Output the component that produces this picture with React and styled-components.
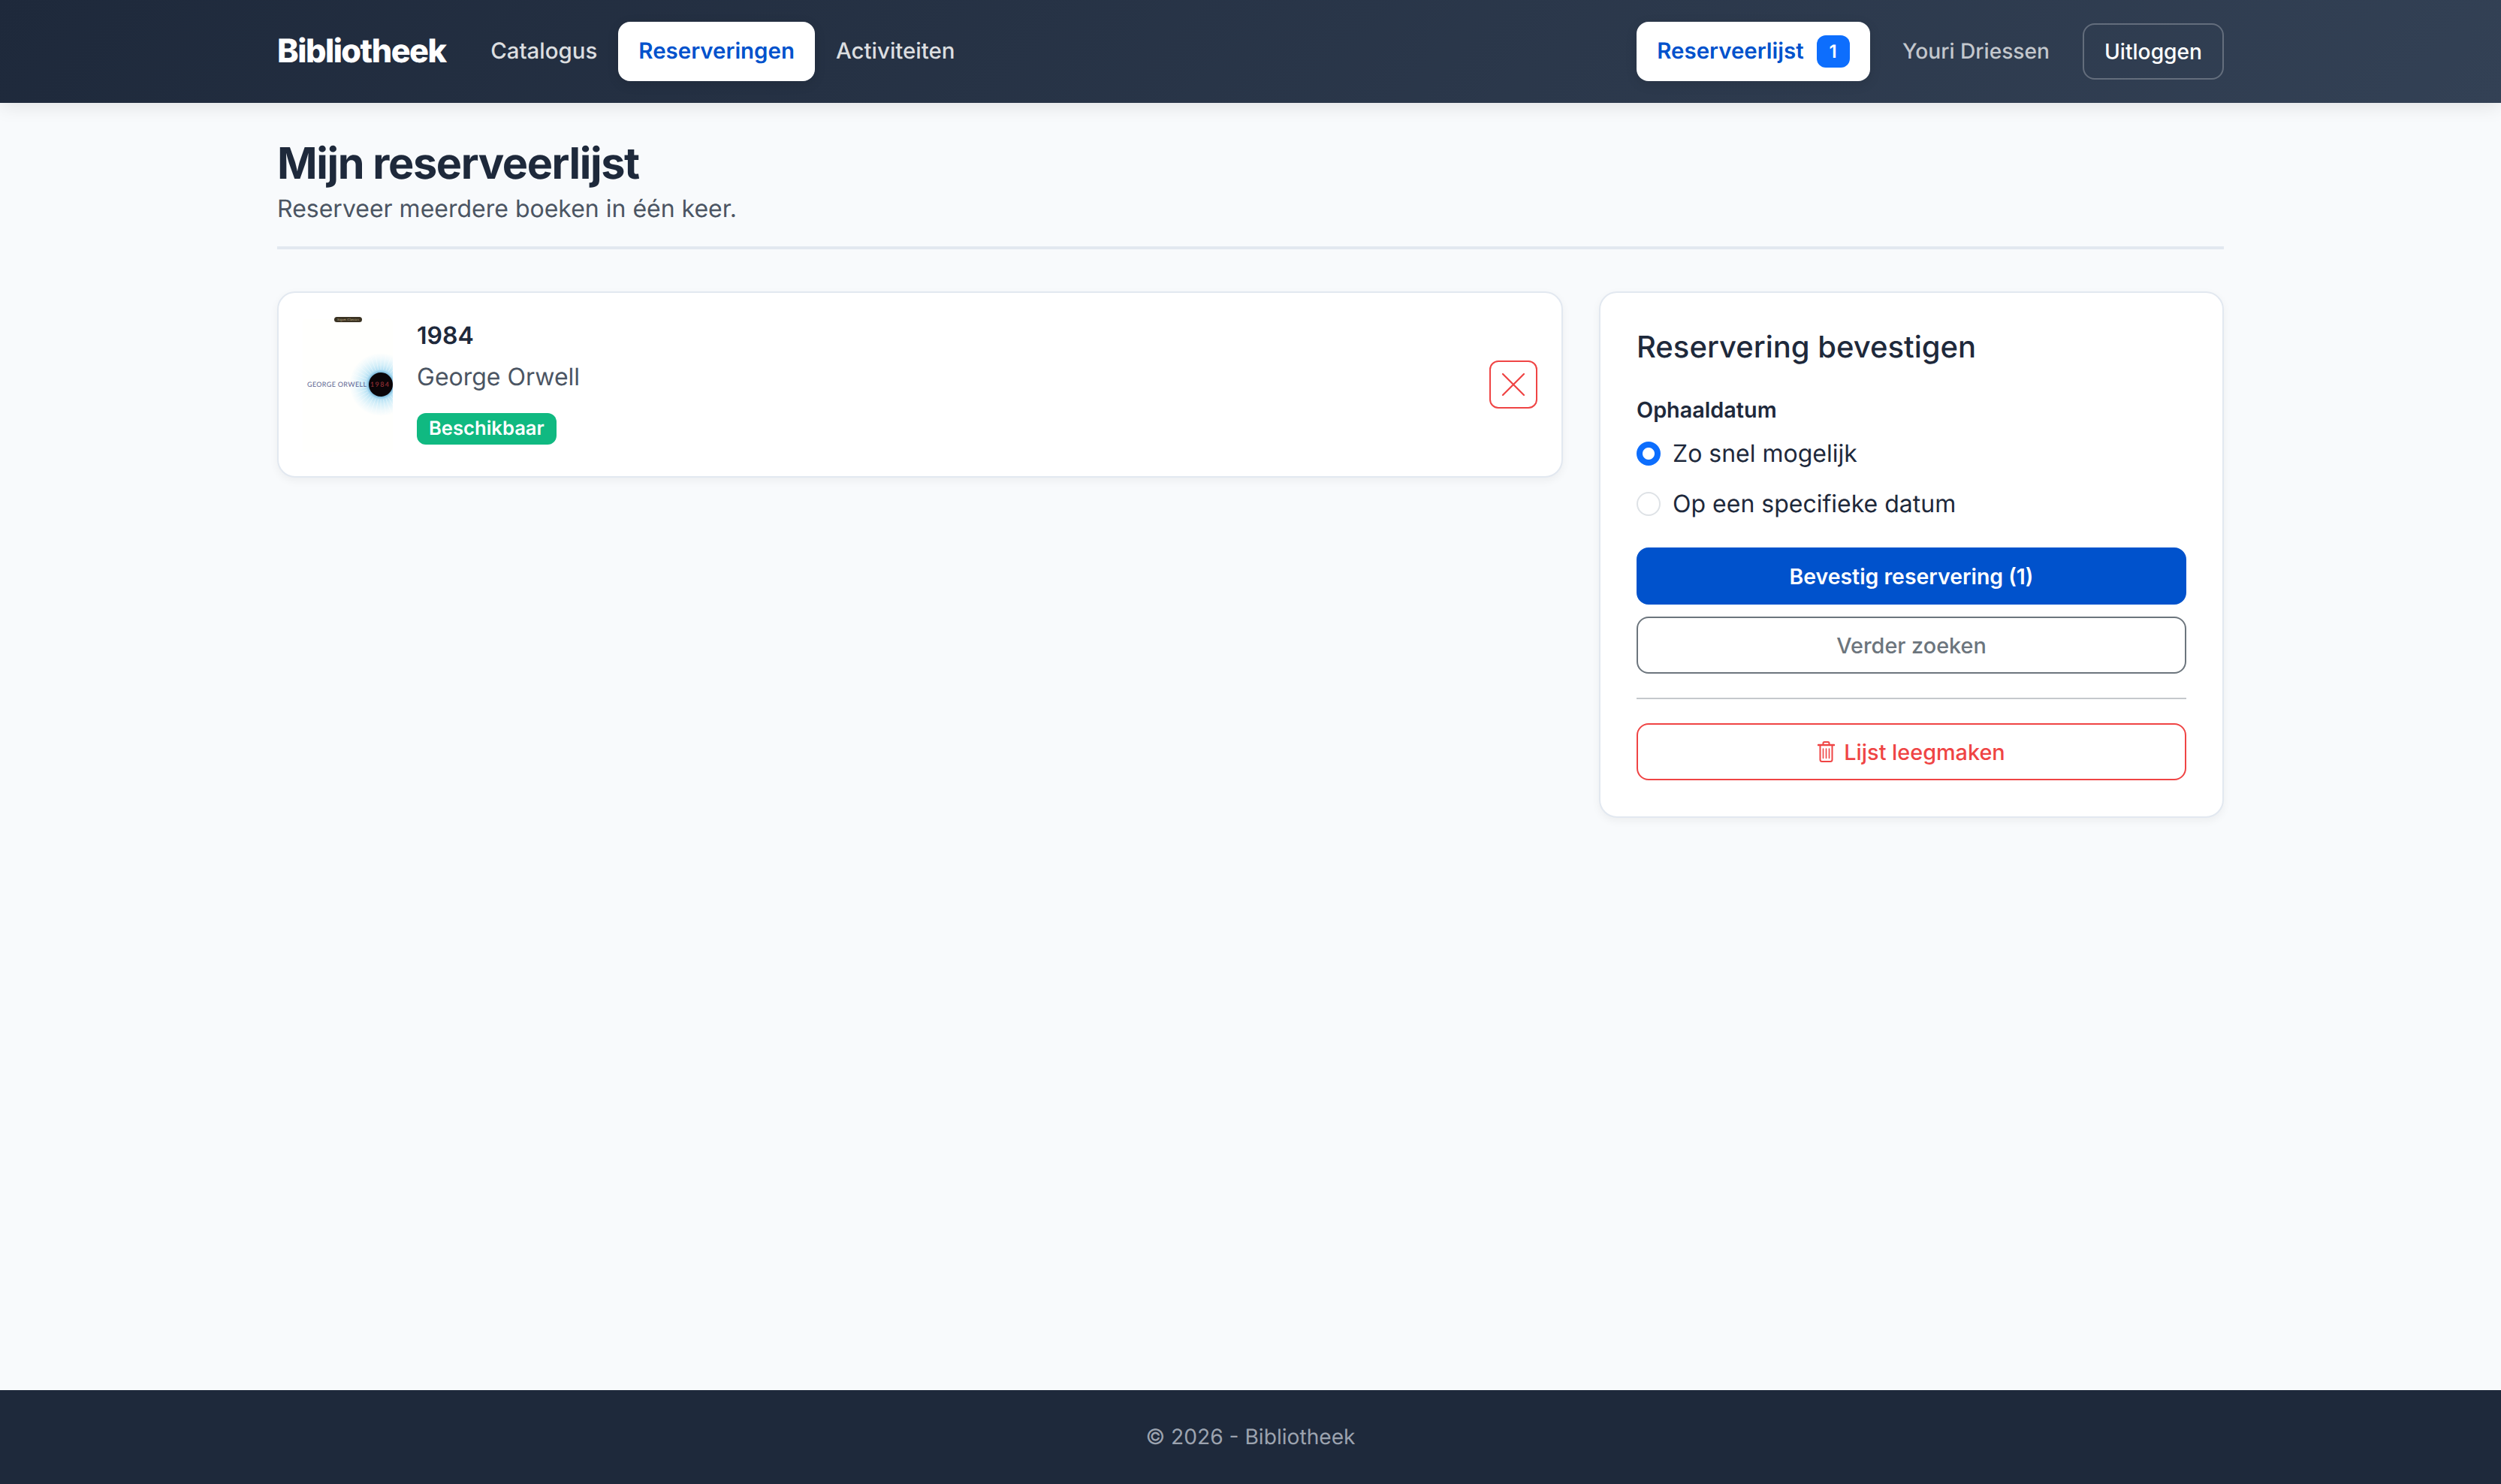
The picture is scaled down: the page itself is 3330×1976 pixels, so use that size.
import React from "react";
import styled, { createGlobalStyle } from "styled-components";

const GlobalStyle = createGlobalStyle`
  * {
    box-sizing: border-box;
  }
  html, body {
    margin: 0;
    padding: 0;
  }
  body {
    background: #f8fafc;
    color: #1e293b;
    font-family: "Inter", "Liberation Sans", sans-serif;
    font-size: 32px;
    line-height: 1.5;
    text-rendering: geometricPrecision;
  }
`;

const Page = styled.div`
  min-height: 100vh;
  display: flex;
  flex-direction: column;
`;

const Navbar = styled.nav`
  height: 137px;
  flex: none;
  background: linear-gradient(135deg, #1e293b, #334155);
  box-shadow: 0 4px 24px rgba(0, 0, 0, 0.1);
  position: relative;
`;

const Container = styled.div`
  width: 2592px;
  margin: 0 auto;
`;

const NavInner = styled(Container)`
  height: 100%;
  display: flex;
  align-items: center;
`;

const Brand = styled.a`
  color: #fff;
  font-size: 43.2px;
  font-weight: 800;
  letter-spacing: -0.035em;
  margin-right: 32px;
`;

const NavLink = styled.a`
  height: 79px;
  display: flex;
  align-items: center;
  gap: 17px;
  padding: 0 27.5px;
  border-radius: 16px;
  font-size: 29.44px;
  color: ${(p) => (p.$active ? "#0052cc" : "rgba(255, 255, 255, 0.85)")};
  background: ${(p) => (p.$active ? "#fff" : "transparent")};
  font-weight: ${(p) => (p.$active ? 600 : 500)};
  box-shadow: ${(p) => (p.$active ? "0 4px 16px rgba(0, 0, 0, 0.1)" : "none")};
`;

const NavRight = styled.div`
  margin-left: auto;
  display: flex;
  align-items: center;
`;

const CountBadge = styled.span`
  width: 44px;
  height: 43px;
  display: flex;
  align-items: center;
  justify-content: center;
  border-radius: 12px;
  background: #0d6efd;
  color: #fff;
  font-size: 24px;
  font-weight: 600;
`;

const UserName = styled.span`
  margin: 0 44px 0 43px;
  font-size: 28.16px;
  font-weight: 500;
  color: rgba(255, 255, 255, 0.72);
`;

const LogoutButton = styled.button`
  width: 188px;
  height: 75px;
  border: 2px solid rgba(255, 255, 255, 0.25);
  border-radius: 16px;
  background: transparent;
  color: #fff;
  font: 500 28.16px "Inter", sans-serif;
`;

const Main = styled(Container)`
  flex: 1;
  padding-top: 46px;
`;

const PageHeader = styled.header`
  border-bottom: 4px solid #e2e8f0;
  padding-bottom: 26px;
  margin-bottom: 56px;
`;

const PageTitle = styled.h1`
  margin: 0 0 2px;
  font-size: 57.6px;
  line-height: 69px;
  font-weight: 700;
  letter-spacing: -1.4px;
  color: #1e293b;
`;

const PageSubtitle = styled.p`
  margin: 0;
  font-size: 32px;
  color: #4b5563;
`;

const Columns = styled.div`
  display: grid;
  grid-template-columns: 1712px 832px;
  gap: 48px;
  align-items: start;
`;

const Card = styled.section`
  background: #fff;
  border: 2px solid #e2e8f0;
  border-radius: 24px;
  box-shadow: 0 4px 12px rgba(0, 0, 0, 0.05);
`;

const BookCard = styled(Card)`
  display: flex;
  align-items: center;
  gap: 32px;
  padding: 32px;
`;

const BookInfo = styled.div`
  flex: 1;
  margin-bottom: 4px;
  display: flex;
  flex-direction: column;
  align-items: flex-start;
`;

const BookTitle = styled.h3`
  margin: 0 0 12px;
  font-size: 32px;
  line-height: 38px;
  font-weight: 600;
  color: #1e293b;
`;

const BookAuthor = styled.p`
  margin: 0 0 24px;
  font-size: 32px;
  line-height: 48px;
  color: #4b5563;
`;

const StatusBadge = styled.span`
  height: 42px;
  display: flex;
  align-items: center;
  padding: 0 16px;
  border-radius: 12px;
  background: #10b981;
  color: #fff;
  font-size: 25.6px;
  font-weight: 600;
`;

const RemoveButton = styled.button`
  width: 64px;
  height: 64px;
  flex: none;
  display: flex;
  align-items: center;
  justify-content: center;
  padding: 0;
  border: 2px solid #ef4444;
  border-radius: 12px;
  background: #fff;
  color: #ef4444;
`;

const SummaryCard = styled(Card)`
  padding: 48px;
  display: flex;
  flex-direction: column;
`;

const SummaryTitle = styled.h2`
  margin: 0 0 38px;
  font-size: 40px;
  line-height: 48px;
  font-weight: 500;
  color: #1e293b;
`;

const FieldLabel = styled.label`
  font-size: 28.8px;
  line-height: 43px;
  font-weight: 600;
  margin-bottom: 3px;
`;

const RadioRow = styled.label`
  height: 67px;
  display: flex;
  align-items: center;
  gap: 16px;
  font-size: 32px;
`;

const Radio = styled.input`
  appearance: none;
  width: 32px;
  height: 32px;
  margin: 0;
  flex: none;
  border-radius: 50%;
  border: 2px solid #dee2e6;
  background: #fff;
  &:checked {
    border-color: #0d6efd;
    background: radial-gradient(circle, #fff 7.5px, #0d6efd 8.5px);
  }
`;

const ActionButton = styled.button`
  width: 100%;
  height: 76px;
  margin-top: ${(p) => p.$top || 0}px;
  display: flex;
  align-items: center;
  justify-content: center;
  gap: 12px;
  border: 2px solid ${(p) => p.$color};
  border-radius: 16px;
  background: ${(p) => (p.$solid ? p.$color : "#fff")};
  color: ${(p) => (p.$solid ? "#fff" : p.$color)};
  font: ${(p) => (p.$solid ? "600 28.4px" : "500 28.8px")} "Inter", sans-serif;
`;

const Divider = styled.hr`
  width: 100%;
  margin: 32px 0;
  border: 0;
  border-top: 2px solid #c5c8cc;
`;

const Footer = styled.footer`
  height: 125px;
  flex: none;
  display: flex;
  align-items: center;
  justify-content: center;
  background: #1e293b;
  color: #9ca3af;
  font-size: 28.16px;
`;

const irisAngles = Array.from({ length: 36 }, (_, i) => (i * Math.PI) / 18);

const BookCover = () => (
  <svg width="120" height="180" viewBox="0 0 120 180" style={{ flex: "none" }}>
    <defs>
      <radialGradient id="iris" gradientUnits="userSpaceOnUse" cx="104" cy="90" r="42">
        <stop offset="0.38" stopColor="#7ab8da" />
        <stop offset="0.46" stopColor="#b4e0f4" />
        <stop offset="0.62" stopColor="#d4eff9" />
        <stop offset="0.82" stopColor="#eff9fc" />
        <stop offset="1" stopColor="#fffffd" />
      </radialGradient>
      <clipPath id="coverClip">
        <rect x="0" y="3" width="120" height="177" rx="3" />
      </clipPath>
    </defs>
    <g clipPath="url(#coverClip)">
      <rect width="120" height="180" fill="#fffffd" />
      <circle cx="104" cy="90" r="42" fill="url(#iris)" />
      {irisAngles.map((a) => (
        <line
          key={a}
          x1={104 + 20 * Math.cos(a)}
          y1={90 + 20 * Math.sin(a)}
          x2={104 + 40 * Math.cos(a)}
          y2={90 + 40 * Math.sin(a)}
          stroke="#fff"
          strokeWidth="1"
          opacity="0.45"
        />
      ))}
      <circle cx="104" cy="90" r="16" fill="#0a0508" />
    </g>
    <rect x="42" y="0" width="37" height="7" rx="3.5" fill="#3a3222" />
    <text x="46" y="5" fontFamily="Liberation Serif, serif" fontSize="4.6" fill="#c4b68c" textLength="29">
      Signet Classics
    </text>
    <text x="6" y="93" fontFamily="Lato, sans-serif" fontSize="9" fill="#5a5f90" textLength="79">
      GEORGE ORWELL
    </text>
    <text x="90" y="93" fontFamily="Lato, sans-serif" fontSize="9" fill="#a8353c" textLength="25">
      1984
    </text>
  </svg>
);

const CloseIcon = () => (
  <svg width="32" height="32" viewBox="0 0 32 32" fill="none" stroke="currentColor" strokeWidth="2.2" strokeLinecap="round">
    <path d="M2 2 L30 30 M30 2 L2 30" />
  </svg>
);

const TrashIcon = () => (
  <svg width="23" height="28" viewBox="0 0 23 28" fill="none" stroke="currentColor" strokeWidth="2" strokeLinecap="round">
    <path d="M7.5 4.5 V2.5 Q7.5 1 9 1 H14 Q15.5 1 15.5 2.5 V4.5" />
    <path d="M1 5 H22" strokeWidth="2.6" />
    <path d="M3.5 5 V24.5 Q3.5 27 6 27 H17 Q19.5 27 19.5 24.5 V5" />
    <path d="M7.5 10 V22.5 M11.5 10 V22.5 M15.5 10 V22.5" strokeWidth="1.6" />
  </svg>
);

export default function App() {
  return (
    <Page>
      <GlobalStyle />
      <Navbar>
        <NavInner>
          <Brand>Bibliotheek</Brand>
          <NavLink>Catalogus</NavLink>
          <NavLink $active>Reserveringen</NavLink>
          <NavLink>Activiteiten</NavLink>
          <NavRight>
            <NavLink $active>
              Reserveerlijst
              <CountBadge>1</CountBadge>
            </NavLink>
            <UserName>Youri Driessen</UserName>
            <LogoutButton>Uitloggen</LogoutButton>
          </NavRight>
        </NavInner>
      </Navbar>
      <Main>
        <PageHeader>
          <PageTitle>Mijn reserveerlijst</PageTitle>
          <PageSubtitle>Reserveer meerdere boeken in één keer.</PageSubtitle>
        </PageHeader>
        <Columns>
          <BookCard>
            <BookCover />
            <BookInfo>
              <BookTitle>1984</BookTitle>
              <BookAuthor>George Orwell</BookAuthor>
              <StatusBadge>Beschikbaar</StatusBadge>
            </BookInfo>
            <RemoveButton aria-label="Verwijderen">
              <CloseIcon />
            </RemoveButton>
          </BookCard>
          <SummaryCard>
            <SummaryTitle>Reservering bevestigen</SummaryTitle>
            <FieldLabel>Ophaaldatum</FieldLabel>
            <RadioRow>
              <Radio type="radio" name="pickup" defaultChecked />
              Zo snel mogelijk
            </RadioRow>
            <RadioRow>
              <Radio type="radio" name="pickup" />
              Op een specifieke datum
            </RadioRow>
            <ActionButton $solid $color="#0052cc" $top={25}>
              Bevestig reservering (1)
            </ActionButton>
            <ActionButton $color="#6c757d" $top={16}>
              Verder zoeken
            </ActionButton>
            <Divider />
            <ActionButton $color="#ef4444">
              <TrashIcon />
              Lijst leegmaken
            </ActionButton>
          </SummaryCard>
        </Columns>
      </Main>
      <Footer>© 2026 - Bibliotheek</Footer>
    </Page>
  );
}
